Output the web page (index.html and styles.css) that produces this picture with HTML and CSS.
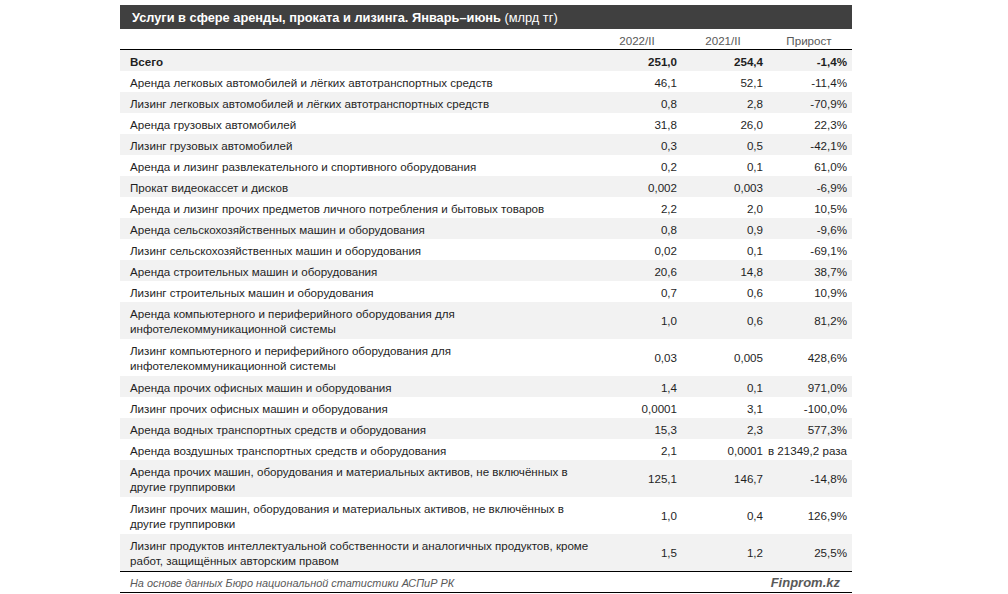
FILE: index.html
```html
<!DOCTYPE html>
<html lang="ru">
<head>
<meta charset="utf-8">
<link rel="stylesheet" href="styles.css">
</head>
<body>
<div class="wrap">
  <div class="title"><b>Услуги в сфере аренды, проката и лизинга. Январь–июнь</b> (млрд тг)</div>
  <div class="table">
    <div class="row head"><div class="name"></div><div class="h">2022/II</div><div class="h">2021/II</div><div class="h">Прирост</div></div>
    <div class="row alt bold"><div class="name">Всего</div><div class="v">251,0</div><div class="v">254,4</div><div class="v">-1,4%</div></div>
    <div class="row"><div class="name">Аренда легковых автомобилей и лёгких автотранспортных средств</div><div class="v">46,1</div><div class="v">52,1</div><div class="v">-11,4%</div></div>
    <div class="row alt"><div class="name">Лизинг легковых автомобилей и лёгких автотранспортных средств</div><div class="v">0,8</div><div class="v">2,8</div><div class="v">-70,9%</div></div>
    <div class="row"><div class="name">Аренда грузовых автомобилей</div><div class="v">31,8</div><div class="v">26,0</div><div class="v">22,3%</div></div>
    <div class="row alt"><div class="name">Лизинг грузовых автомобилей</div><div class="v">0,3</div><div class="v">0,5</div><div class="v">-42,1%</div></div>
    <div class="row"><div class="name">Аренда и лизинг развлекательного и спортивного оборудования</div><div class="v">0,2</div><div class="v">0,1</div><div class="v">61,0%</div></div>
    <div class="row alt"><div class="name">Прокат видеокассет и дисков</div><div class="v">0,002</div><div class="v">0,003</div><div class="v">-6,9%</div></div>
    <div class="row"><div class="name">Аренда и лизинг прочих предметов личного потребления и бытовых товаров</div><div class="v">2,2</div><div class="v">2,0</div><div class="v">10,5%</div></div>
    <div class="row alt"><div class="name">Аренда сельскохозяйственных машин и оборудования</div><div class="v">0,8</div><div class="v">0,9</div><div class="v">-9,6%</div></div>
    <div class="row"><div class="name">Лизинг сельскохозяйственных машин и оборудования</div><div class="v">0,02</div><div class="v">0,1</div><div class="v">-69,1%</div></div>
    <div class="row alt"><div class="name">Аренда строительных машин и оборудования</div><div class="v">20,6</div><div class="v">14,8</div><div class="v">38,7%</div></div>
    <div class="row"><div class="name">Лизинг строительных машин и оборудования</div><div class="v">0,7</div><div class="v">0,6</div><div class="v">10,9%</div></div>
    <div class="row alt two"><div class="name">Аренда компьютерного и периферийного оборудования для<br>инфотелекоммуникационной системы</div><div class="v">1,0</div><div class="v">0,6</div><div class="v">81,2%</div></div>
    <div class="row two"><div class="name">Лизинг компьютерного и периферийного оборудования для<br>инфотелекоммуникационной системы</div><div class="v">0,03</div><div class="v">0,005</div><div class="v">428,6%</div></div>
    <div class="row alt"><div class="name">Аренда прочих офисных машин и оборудования</div><div class="v">1,4</div><div class="v">0,1</div><div class="v">971,0%</div></div>
    <div class="row"><div class="name">Лизинг прочих офисных машин и оборудования</div><div class="v">0,0001</div><div class="v">3,1</div><div class="v">-100,0%</div></div>
    <div class="row alt"><div class="name">Аренда водных транспортных средств и оборудования</div><div class="v">15,3</div><div class="v">2,3</div><div class="v">577,3%</div></div>
    <div class="row"><div class="name">Аренда воздушных транспортных средств и оборудования</div><div class="v">2,1</div><div class="v">0,0001</div><div class="v">в 21349,2 раза</div></div>
    <div class="row alt two"><div class="name">Аренда прочих машин, оборудования и материальных активов, не включённых в<br>другие группировки</div><div class="v">125,1</div><div class="v">146,7</div><div class="v">-14,8%</div></div>
    <div class="row two"><div class="name">Лизинг прочих машин, оборудования и материальных активов, не включённых в<br>другие группировки</div><div class="v">1,0</div><div class="v">0,4</div><div class="v">126,9%</div></div>
    <div class="row alt two"><div class="name">Лизинг продуктов интеллектуальной собственности и аналогичных продуктов, кроме<br>работ, защищённых авторским правом</div><div class="v">1,5</div><div class="v">1,2</div><div class="v">25,5%</div></div>
  </div>
  <div class="foot">
    <span class="src">На основе данных Бюро национальной статистики АСПиР РК</span>
    <span class="brand">Finprom.kz</span>
  </div>
</div>
</body>
</html>
```

FILE: styles.css
```css
html, body {
  margin: 0;
  padding: 0;
  background: #ffffff;
}
body {
  font-family: "Liberation Sans", Arial, sans-serif;
  font-size: 11.6px;
  color: #1f1f1f;
}
.wrap {
  width: 732px;
  margin: 5px 0 0 120px;
}
.title {
  background: #404040;
  color: #ffffff;
  height: 24px;
  line-height: 25px;
  padding-left: 12px;
  font-size: 12.8px;
  white-space: nowrap;
}
.title b {
  font-weight: bold;
}
.table {
  display: flex;
  flex-direction: column;
  margin-top: 1px;
  border-bottom: 1px solid #000;
}
.row {
  display: grid;
  grid-template-columns: minmax(0, 1fr) 86px 86px 86px;
  align-items: center;
  box-sizing: border-box;
  height: 21px;
  padding-top: 2px;
  line-height: 15px;
}
.row.two {
  height: 37px;
  padding-top: 1px;
  line-height: 15.5px;
}
.row.alt {
  background: #f2f2f2;
}
.row.bold {
  font-weight: bold;
}
.row.head {
  height: 20px;
  padding-top: 2px;
  color: #595959;
  border-bottom: 1px solid #000;
}
.name {
  padding-left: 10px;
  white-space: nowrap;
}
.h {
  text-align: center;
}
.v {
  text-align: right;
  padding-right: 3px;
  white-space: nowrap;
}
.row .v:last-child {
  padding-right: 5px;
}
.foot {
  display: flex;
  justify-content: space-between;
  align-items: center;
  box-sizing: border-box;
  height: 21px;
  padding: 1px 12px 0 10px;
  border-bottom: 1px solid #000;
  color: #595959;
}
.src {
  font-style: italic;
  font-size: 10.9px;
}
.brand {
  font-style: italic;
  font-weight: bold;
  font-size: 13px;
}
```
